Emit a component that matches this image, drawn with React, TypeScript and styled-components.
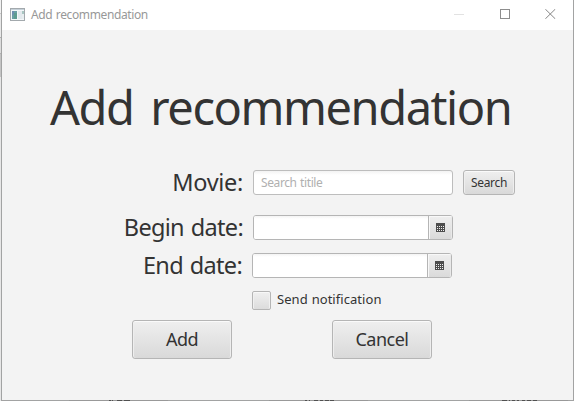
import React from "react";
import styled, { createGlobalStyle } from "styled-components";

const GlobalStyle = createGlobalStyle`
  * { box-sizing: border-box; }
  body {
    margin: 0;
    background: #a0a0a0;
    font-family: "Noto Sans", "Open Sans", sans-serif;
    color: #333;
    overflow: hidden;
  }
`;

const Desktop = styled.div`
  position: relative;
  width: 574px;
  height: 401px;
  padding-left: 1px;
  background: linear-gradient(#f2f2f2 0 13px, #c8c8c8 13px 14px, #e8e8e8 14px 37px, #b0b0b0 37px 38px, #dcdcdc 38px 53px, #b0b0b0 53px 54px, #c4c4c4 54px 77px, #e6e6e6 77px);
`;

const Window = styled.div`
  width: 573px;
  height: 401px;
  border: 1px solid #a2a3a3;
  border-top: 0;
  background: #f3f3f3;
  display: flex;
  flex-direction: column;
`;

const TitleBar = styled.header`
  height: 30px;
  background: #fff;
  display: flex;
  align-items: center;
  padding: 0 17px 2px 8px;
`;

const Caption = styled.span`
  flex: 1;
  margin: 2px 0 0 6px;
  font-size: 12px;
  line-height: 16px;
  letter-spacing: -0.38px;
  word-spacing: 0.8px;
  color: #989898;
  white-space: nowrap;
`;

const WindowControls = styled.div`
  display: flex;
  gap: 35px;
  svg { display: block; }
`;

const Heading = styled.h1`
  margin: 43px 0 0 48px;
  height: 69px;
  line-height: 68px;
  font-size: 47px;
  font-weight: 400;
  letter-spacing: -1.44px;
  word-spacing: 6px;
  white-space: nowrap;
`;

const Field = styled.div<{ $top: number; $shift?: number }>`
  display: grid;
  grid-template-columns: 241px 200px 52px;
  column-gap: 10px;
  height: 25px;
  margin-top: ${(p) => p.$top}px;
  margin-left: ${(p) => p.$shift ?? 0}px;
`;

const Label = styled.label<{ $spacing: number }>`
  text-align: right;
  font-size: 23.5px;
  line-height: 25px;
  letter-spacing: ${(p) => p.$spacing}px;
  word-spacing: 1.5px;
  white-space: nowrap;
`;

const TextBox = styled.input`
  width: 200px;
  height: 25px;
  padding: 0 7px 1px;
  border: 1px solid #bdbdbd;
  border-radius: 3px;
  background: linear-gradient(#f3f3f3, #fff 4px);
  font: 12px/23px "Noto Sans", sans-serif;
  letter-spacing: -0.4px;
  word-spacing: 0.8px;
  color: #333;
  outline: 0;
  &::placeholder { color: #b0b0b0; opacity: 1; }
`;

const DateBox = styled.div`
  display: flex;
  width: 200px;
  height: 25px;
  border: 1px solid #b5b5b5;
  border-radius: 3px;
  background: #fff;
  overflow: hidden;
`;

const DateInput = styled.input`
  width: 174px;
  height: 23px;
  padding: 0 7px;
  border: 0;
  background: linear-gradient(#f4f4f4, #fff 3px);
  outline: 0;
`;

const CalendarButton = styled.button`
  flex: 1;
  display: flex;
  align-items: center;
  justify-content: center;
  padding: 0;
  border: 0;
  border-left: 1px solid #b5b5b5;
  background: linear-gradient(#efefef, #dadada);
  box-shadow: inset 1px 1px #f8f8f8, inset -1px 0 #e9e9e9;
`;

const Button = styled.button<{ $large?: boolean }>`
  width: ${(p) => (p.$large ? 100 : 52)}px;
  height: ${(p) => (p.$large ? 39 : 25)}px;
  padding: 0 0 1px;
  border: 1px solid #b5b5b5;
  border-radius: 3px;
  background: linear-gradient(#efefef, #d9d9d9);
  box-shadow: inset 0 1px #fafafa, inset 1px 0 #eee, inset -1px 0 #eee;
  font-family: "Noto Sans", sans-serif;
  font-size: ${(p) => (p.$large ? 18 : 12)}px;
  letter-spacing: ${(p) => (p.$large ? -0.5 : -0.3)}px;
  color: #333;
`;

const Option = styled.label`
  display: flex;
  align-items: center;
  gap: 6px;
  height: 19px;
  margin: 13px 0 0 250px;
  font-size: 13px;
  letter-spacing: 0.05px;
  word-spacing: 0.5px;
  line-height: 17px;
  white-space: nowrap;
`;

const OptionText = styled.span`
  padding-bottom: 2px;
`;

const CheckBox = styled.input.attrs({ type: "checkbox" })`
  appearance: none;
  width: 19px;
  height: 19px;
  margin: 0;
  border: 1px solid #b5b5b5;
  border-radius: 2px;
  background: linear-gradient(#f0f0f0, #dcdcdc);
  box-shadow: inset 0 1px #f8f8f8, inset 1px 0 #f0f0f0, inset -1px 0 #f0f0f0;
`;

const Actions = styled.div`
  display: flex;
  gap: 100px;
  margin: 10px 0 0 130px;
`;

/* Tops of the controls behind the window, showing along its lower edge. */
const Underlay = styled.svg`
  position: absolute;
  left: 0;
  bottom: 0;
`;

const AppIcon = () => (
  <svg width="15" height="13" viewBox="0 0 15 13" shapeRendering="crispEdges">
    <rect x="0.5" y="0.5" width="14" height="12" fill="#f4f7f9" stroke="#a3a9ad" />
    <path d="M1 1h13v1H1z" fill="#c5d0d8" />
    <path d="M2 3h5v8H2z" fill="#6b9fa5" />
    <path d="M2 3h2v4H2z" fill="#6f8fb0" />
    <path d="M4 5h3v6H4z" fill="#5f9c90" />
    <path d="M8 3h4v8H8z" fill="#e3e9ed" />
    <path d="M12 3h2v3h-2z" fill="#a9c6c2" />
    <path d="M12 6h2v5h-2z" fill="#e8eef0" />
  </svg>
);

const CalendarIcon = () => (
  <svg width="9" height="9" viewBox="0 0 9 9" shapeRendering="crispEdges">
    <path d="M0 0h9v9H0z" fill="#4c4c4c" />
    {[3, 5, 7].map((y) =>
      [1, 3, 5, 7].map((x) => (
        <rect key={`${x}-${y}`} x={x} y={y} width="1" height="1" fill="#eee" />
      ))
    )}
  </svg>
);

const DatePicker = ({ id }: { id: string }) => (
  <DateBox>
    <DateInput id={id} />
    <CalendarButton aria-label="Open calendar">
      <CalendarIcon />
    </CalendarButton>
  </DateBox>
);

export default function App() {
  return (
    <>
      <GlobalStyle />
      <Desktop>
        <Window>
          <TitleBar>
            <AppIcon />
            <Caption>Add recommendation</Caption>
            <WindowControls>
              <svg width="11" height="10" shapeRendering="crispEdges">
                <path d="M0 5.5h10" stroke="#e2e2e2" />
              </svg>
              <svg width="10" height="10" shapeRendering="crispEdges">
                <rect x="0.5" y="0.5" width="9" height="9" fill="none" stroke="#8d8d8d" />
              </svg>
              <svg width="11" height="10">
                <path d="M0.3 0.1l10 9.8M10.3 0.1l-10 9.8" stroke="#858585" />
              </svg>
            </WindowControls>
          </TitleBar>
          <Heading>Add recommendation</Heading>
          <Field $top={28}>
            <Label htmlFor="movie" $spacing={-0.3}>Movie:</Label>
            <TextBox id="movie" placeholder="Search titile" />
            <Button>Search</Button>
          </Field>
          <Field $top={20}>
            <Label htmlFor="begin" $spacing={-0.7}>Begin date:</Label>
            <DatePicker id="begin" />
          </Field>
          <Field $top={13} $shift={-1}>
            <Label htmlFor="end" $spacing={-0.7}>End date:</Label>
            <DatePicker id="end" />
          </Field>
          <Option>
            <CheckBox />
            <OptionText>Send notification</OptionText>
          </Option>
          <Actions>
            <Button $large>Add</Button>
            <Button $large>Cancel</Button>
          </Actions>
        </Window>
        <Underlay width="574" height="1" shapeRendering="crispEdges">
          <path d="M69 .5h99M269 .5h99M469 .5h99" stroke="#999" />
          <path
            d="M109 .5h2M112 .5h1M117 .5h5M124 .5h6M305 .5h2M309 .5h1M314 .5h4M320 .5h3M325 .5h4M330 .5h4M502 .5h5M509 .5h1M512 .5h3M517 .5h2M522 .5h3M527 .5h4M533 .5h4"
            stroke="#505050"
          />
        </Underlay>
      </Desktop>
    </>
  );
}
